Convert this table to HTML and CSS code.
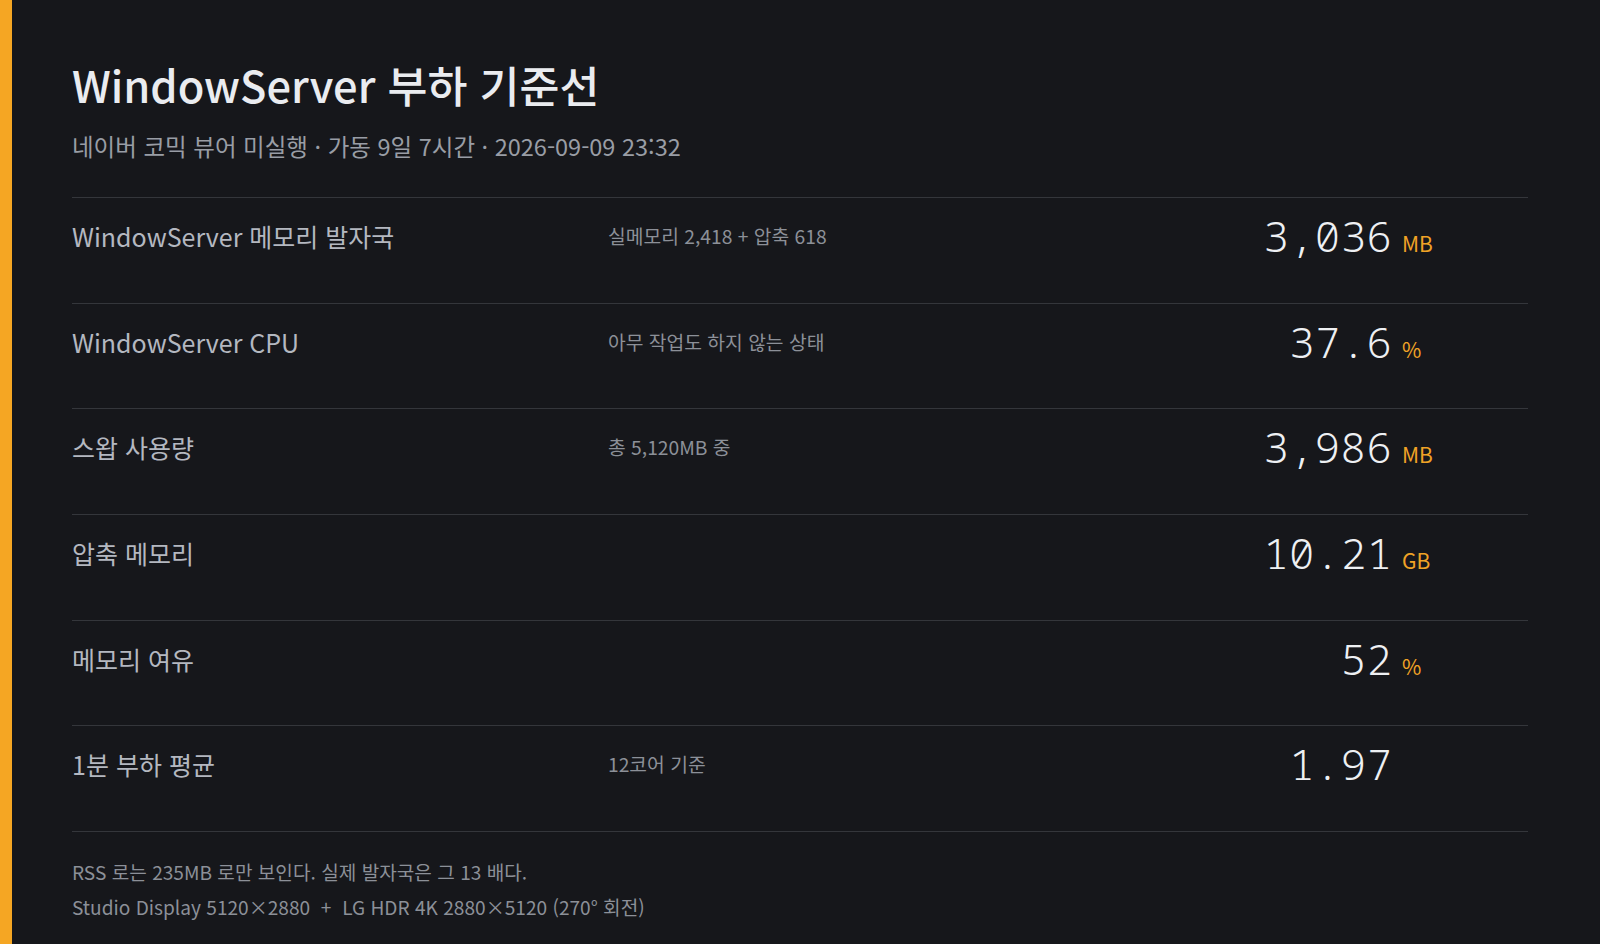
FILE: index.html
```html
<!DOCTYPE html>
<html lang="ko">
<head>
<meta charset="utf-8">
<title>WindowServer 부하 기준선</title>
<link rel="stylesheet" href="styles.css">
</head>
<body>
<main class="page">
  <header class="head">
    <h1 class="title">WindowServer 부하 기준선</h1>
    <p class="subtitle">네이버 코믹 뷰어 미실행 · 가동 9일 7시간 · 2026-09-09 23:32</p>
  </header>
  <section class="table">
    <div class="row">
      <div class="label">WindowServer 메모리 발자국</div>
      <div class="note">실메모리 2,418 + 압축 618</div>
      <div class="reading"><span class="value">3,036</span><span class="unit">MB</span></div>
    </div>
    <div class="row">
      <div class="label">WindowServer CPU</div>
      <div class="note">아무 작업도 하지 않는 상태</div>
      <div class="reading"><span class="value">37.6</span><span class="unit">%</span></div>
    </div>
    <div class="row">
      <div class="label">스왑 사용량</div>
      <div class="note">총 5,120MB 중</div>
      <div class="reading"><span class="value">3,986</span><span class="unit">MB</span></div>
    </div>
    <div class="row">
      <div class="label">압축 메모리</div>
      <div class="note"></div>
      <div class="reading"><span class="value">10.21</span><span class="unit">GB</span></div>
    </div>
    <div class="row">
      <div class="label">메모리 여유</div>
      <div class="note"></div>
      <div class="reading"><span class="value">52</span><span class="unit">%</span></div>
    </div>
    <div class="row">
      <div class="label">1분 부하 평균</div>
      <div class="note">12코어 기준</div>
      <div class="reading"><span class="value">1.97</span><span class="unit"></span></div>
    </div>
  </section>
  <footer class="foot">
    <p>RSS 로는 235MB 로만 보인다. 실제 발자국은 그 13 배다.</p>
    <p>Studio Display 5120×2880 &nbsp;+&nbsp; LG HDR 4K 2880×5120 (270° 회전)</p>
  </footer>
</main>
</body>
</html>
```

FILE: styles.css
```css
html, body {
  margin: 0;
  padding: 0;
}

body {
  background: #16171b;
  font-family: "Noto Sans CJK KR", "Noto Sans", sans-serif;
  font-weight: 400;
  color: #b4b8c0;
}

.page {
  box-sizing: border-box;
  min-height: 944px;
  border-left: 12px solid #f5a623;
  padding: 54px 72px 0 60px;
}

.title {
  margin: 0;
  font-size: 43.4px;
  line-height: 60px;
  font-weight: 500;
  color: #eaecf0;
}

.subtitle {
  margin: 17px 0 0;
  font-size: 23.5px;
  line-height: 30px;
  color: #999da5;
}

.table {
  margin-top: 36px;
  border-bottom: 1px solid #34363b;
}

.row {
  box-sizing: border-box;
  height: 105.67px;
  border-top: 1px solid #34363b;
  padding-top: 14px;
  display: grid;
  grid-template-columns: 536px 1fr auto;
  grid-template-rows: 48px;
  align-items: center;
}

.label {
  font-size: 25px;
  line-height: 32px;
  color: #b4b8c0;
}

.note {
  font-size: 19.25px;
  line-height: 26px;
  color: #8c9098;
}

.reading {
  display: flex;
  align-items: baseline;
  justify-content: flex-end;
}

.value {
  font-family: "Noto Sans Mono", "DejaVu Sans Mono", monospace;
  font-weight: 300;
  font-size: 43px;
  line-height: 48px;
  color: #eef0f3;
  text-align: right;
}

.unit {
  box-sizing: border-box;
  width: 136px;
  padding-left: 10px;
  font-size: 21px;
  line-height: 26px;
  color: #f0a326;
}

.foot {
  padding-top: 23px;
}

.foot p {
  margin: 0;
  font-size: 19.1px;
  line-height: 35px;
  color: #8c9098;
}
```
